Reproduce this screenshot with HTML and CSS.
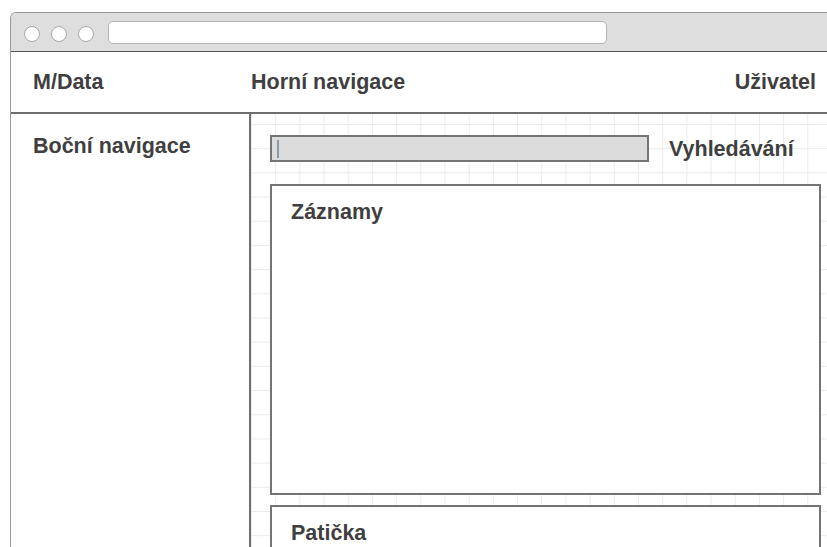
FILE: index.html
```html
<!DOCTYPE html>
<html lang="cs">
<head>
<meta charset="utf-8">
<title>M/Data – wireframe</title>
<link rel="stylesheet" href="styles.css">
</head>
<body>
<div class="window">
  <div class="titlebar">
    <span class="dot"></span>
    <span class="dot"></span>
    <span class="dot"></span>
    <span class="urlbar"></span>
  </div>
  <header class="topbar">
    <div class="brand">M/Data</div>
    <nav class="topnav">Horní navigace</nav>
    <div class="user">Uživatel</div>
  </header>
  <div class="body">
    <aside class="sidebar">Boční navigace</aside>
    <main class="content">
      <div class="search">
        <div class="search-input"><span class="caret"></span></div>
        <span class="search-label">Vyhledávání</span>
      </div>
      <section class="panel records">Záznamy</section>
      <section class="panel footer">Patička</section>
    </main>
  </div>
</div>
</body>
</html>
```

FILE: styles.css
```css
html, body {
  margin: 0;
  padding: 0;
  background: #ffffff;
  overflow: hidden;
  height: 100%;
}

body {
  font-family: "Liberation Sans", Arial, sans-serif;
  font-weight: bold;
  font-size: 21.5px;
  color: #3f3f3f;
}

.window {
  margin: 12px 0 0 10px;
  width: 830px;
  height: 535px;
  overflow: hidden;
  border: 1px solid #9a9a9a;
  border-bottom: none;
  border-radius: 6px 6px 0 0;
  box-sizing: border-box;
  display: flex;
  flex-direction: column;
}

/* window chrome */
.titlebar {
  flex: none;
  height: 38px;
  background: #dedede;
  border-bottom: 1px solid #555555;
  border-radius: 5px 5px 0 0;
  display: flex;
  align-items: center;
  padding-left: 13px;
}

.dot {
  flex: none;
  width: 16px;
  height: 16px;
  box-sizing: border-box;
  border-radius: 50%;
  background: #ffffff;
  border: 1px solid #a8a8a8;
  margin-right: 11px;
  margin-top: 3px;
}

.urlbar {
  flex: none;
  margin-left: 3px;
  width: 499px;
  height: 23px;
  box-sizing: border-box;
  background: #ffffff;
  border: 1px solid #b3b3b3;
  border-radius: 5px;
}

/* top bar */
.topbar {
  flex: none;
  height: 60px;
  border-bottom: 2px solid #6e6e6e;
  display: flex;
  align-items: center;
}

.brand {
  width: 240px;
  box-sizing: border-box;
  padding-left: 22px;
}

.topnav {
  flex: 1;
}

.user {
  padding-right: 23px;
}

/* body */
.body {
  flex: 1;
  display: flex;
  min-height: 0;
}

.sidebar {
  flex: none;
  width: 216px;
  border-right: 2px solid #6e6e6e;
  padding: 20px 0 0 22px;
}

.content {
  flex: 1;
  padding: 21px 18px 0 19px;
  display: flex;
  flex-direction: column;
  background-color: #ffffff;
  background-image:
    linear-gradient(to right, #ebebeb 1px, transparent 1px),
    linear-gradient(to bottom, #ebebeb 1px, transparent 1px);
  background-size: 24.2px 24.2px;
  background-position: 0 10px;
}

.search {
  flex: none;
  display: flex;
  align-items: center;
  height: 27px;
}

.search-input {
  width: 379px;
  height: 27px;
  box-sizing: border-box;
  background: #dcdcdc;
  border: 2px solid #747474;
  display: flex;
  align-items: center;
  padding-left: 5px;
}

.caret {
  width: 2px;
  height: 18px;
  background: #8a9aa8;
}

.search-label {
  margin-left: 20px;
  margin-top: 2px;
}

.panel {
  flex: none;
  background: #ffffff;
  border: 2px solid #747474;
  padding: 14px 19px;
}

.records {
  margin-top: 22px;
  height: 279px;
}

.footer {
  margin-top: 10px;
  height: 80px;
}
```
